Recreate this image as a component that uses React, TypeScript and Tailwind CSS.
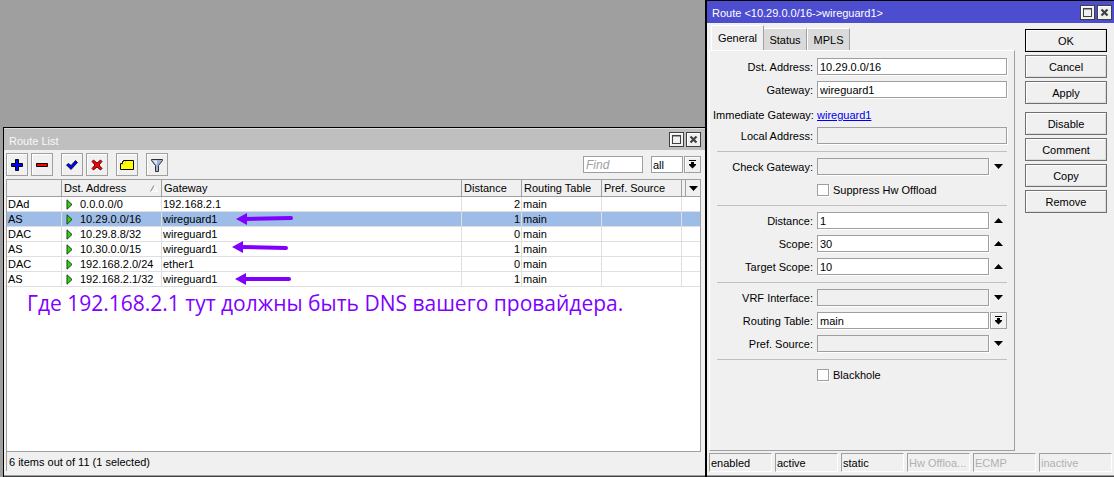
import { useId, type ReactNode } from "react";

const routes = [
  { flags: "DAd", dst: "0.0.0.0/0", gateway: "192.168.2.1", distance: 2, table: "main" },
  { flags: "AS", dst: "10.29.0.0/16", gateway: "wireguard1", distance: 1, table: "main", selected: true },
  { flags: "DAC", dst: "10.29.8.8/32", gateway: "wireguard1", distance: 0, table: "main" },
  { flags: "AS", dst: "10.30.0.0/15", gateway: "wireguard1", distance: 1, table: "main" },
  { flags: "DAC", dst: "192.168.2.0/24", gateway: "ether1", distance: 0, table: "main" },
  { flags: "AS", dst: "192.168.2.1/32", gateway: "wireguard1", distance: 1, table: "main" },
];

function WindowButtons() {
  const cls =
    "flex size-[15px] items-center justify-center border border-[#404040] bg-[#f0f0f0] shadow-[inset_1px_1px_0_#ffffff]";
  return (
    <div className="flex gap-0.5">
      <button type="button" aria-label="Maximize" className={cls}>
        <svg width="9" height="9" viewBox="0 0 9 9" shapeRendering="crispEdges">
          <path d="M.5 .5h8v8h-8z" fill="none" stroke="#404040" />
          <path d="M1 1h7v1H1z" fill="#9f9f9f" />
        </svg>
      </button>
      <button type="button" aria-label="Close" className={cls}>
        <svg width="9" height="9" viewBox="0 0 9 9">
          <path d="M1.5 1.5l6 6M7.5 1.5l-6 6" stroke="#404040" strokeWidth="2.2" />
        </svg>
      </button>
    </div>
  );
}

function ToolButton({ label, children }: { label: string; children: ReactNode }) {
  return (
    <button
      type="button"
      aria-label={label}
      className="flex h-[23px] w-[22px] items-center justify-center border border-[#9f9f9f] bg-[#f0f0f0] shadow-[inset_1px_1px_0_#ffffff]"
    >
      <svg width="16" height="16" viewBox="0 0 16 16">
        {children}
      </svg>
    </button>
  );
}

function Triangle({ up = false }: { up?: boolean }) {
  return (
    <svg width="9" height="5" viewBox="0 0 9 5">
      <path d={up ? "M0 5L4.5 0L9 5z" : "M0 0h9L4.5 5z"} fill="#000" />
    </svg>
  );
}

function PickButton({ label }: { label: string }) {
  return (
    <button
      type="button"
      aria-label={label}
      className="flex size-[17px] shrink-0 items-center justify-center border border-[#9f9f9f] bg-[#f0f0f0] shadow-[inset_1px_1px_0_#ffffff]"
    >
      <svg width="7" height="9" viewBox="0 0 7 9">
        <path d="M0 0h7v1H0zM2 2h3v2h2v1L3.500 8.500L0 5V4h2z" fill="#000" />
      </svg>
    </button>
  );
}

function Separator() {
  return <div className="ml-1 h-0.5 border-b border-[#bfbfbf]" />;
}

type FieldProps = {
  label: string;
  value?: string;
  control?: "none" | "down" | "up" | "pick";
};

function Field({ label, value = "", control = "none" }: FieldProps) {
  const id = useId();
  return (
    <div className="flex h-[17px] items-center">
      <label htmlFor={id} className="w-[100px] shrink-0 text-right whitespace-nowrap">
        {label}:
      </label>
      <input
        id={id}
        type="text"
        defaultValue={value}
        className={
          "ml-1 h-[17px] min-w-0 flex-1 border border-[#9f9f9f] px-0.5 shadow-[1px_1px_0_#ffffff] outline-none " +
          (value ? "bg-white" : "bg-[#f0f0f0]")
        }
      />
      {control === "pick" && (
        <div className="ml-px">
          <PickButton label={"Choose " + label} />
        </div>
      )}
      {(control === "up" || control === "down") && (
        <button
          type="button"
          aria-label={(control === "up" ? "Collapse " : "Expand ") + label}
          className="ml-px flex size-[17px] shrink-0 items-center justify-center"
        >
          <Triangle up={control === "up"} />
        </button>
      )}
    </div>
  );
}

function Check({ label }: { label: string }) {
  return (
    <label className="ml-[104px] flex h-[17px] items-center gap-1">
      <input
        type="checkbox"
        className="size-3 appearance-none border border-[#9f9f9f] bg-white shadow-[1px_1px_0_#ffffff]"
      />
      {label}
    </label>
  );
}

function SideButton({ label, primary = false }: { label: string; primary?: boolean }) {
  return (
    <button
      type="button"
      className={
        "h-[23px] w-full border bg-[#f0f0f0] text-center shadow-[inset_1px_1px_0_#ffffff,inset_-1px_-1px_0_#dcdcdc] " +
        (primary ? "border-black" : "border-[#707070]")
      }
    >
      {label}
    </button>
  );
}

function Arrow({ d, head }: { d: string; head: string }) {
  return (
    <g>
      <path d={d} stroke="#8000ff" strokeWidth="4" strokeLinecap="round" />
      <path d={head} fill="#8000ff" />
    </g>
  );
}

function RouteList() {
  const th = "h-[17px] border-r border-b border-[#9f9f9f] bg-[#f0f0f0] px-0.5 py-0 text-left font-normal whitespace-nowrap";
  const td = "h-[15px] border-r border-b border-[#dfdfdf] px-px py-0 whitespace-nowrap leading-[14px]";
  return (
    <section className="flex flex-1 flex-col border-t border-l border-black bg-[#f0f0f0]">
      <header className="flex h-[22px] items-center justify-between border-t border-[#dcdcdc] bg-[#bfbfbf] pr-1 pl-[5px] text-[#f8f8f8]">
        <h2 className="pt-0.5">Route List</h2>
        <WindowButtons />
      </header>
      <div className="flex flex-1 flex-col pr-1 pl-0.5">
        <div className="flex h-[29px] items-center">
          <div className="flex gap-[3px]">
            <ToolButton label="Add">
              <path d="M6.5 2.5h3v4h4v3h-4v4h-3v-4h-4v-3h4z" fill="#0000ff" stroke="#000" />
            </ToolButton>
            <ToolButton label="Remove">
              <path d="M2.5 6.5h11v3h-11z" fill="#ff0000" stroke="#000" />
            </ToolButton>
          </div>
          <div className="ml-2 flex gap-[3px]">
            <ToolButton label="Enable">
              <path d="M2.5 8L4.5 6.5L7 8.5L11.5 3.5L13.5 5.5L7 12.5z" fill="#0000ff" stroke="#000" strokeWidth=".8" />
            </ToolButton>
            <ToolButton label="Disable">
              <path
                d="M4.5 3L8 6L11.5 3L13 4.5L10 8L13 11.5L11.5 13L8 10L4.5 13L3 11.5L6 8L3 4.5z"
                fill="#ff0000"
                stroke="#400"
                strokeWidth=".9"
              />
            </ToolButton>
          </div>
          <div className="ml-2 flex gap-2">
            <ToolButton label="Comment">
              <path d="M4.500 3.500h10v9h-13v-6h2v-2h1z" fill="#ffff00" stroke="#000" />
              <path d="M2 7.500h4M6.500 4v3" fill="none" stroke="#f0d060" />
            </ToolButton>
            <ToolButton label="Filter">
              <path d="M2.500 2.500h11v1L9.500 8.500v6h-3v-6L2.500 3.500z" fill="#9fb4dc" stroke="#303030" />
              <path d="M4 3.500h4L7.500 8z" fill="#e8f0ff" />
            </ToolButton>
          </div>
          <div className="ml-auto flex items-center">
            <input
              type="text"
              aria-label="Find"
              placeholder="Find"
              className="h-[17px] w-[60px] border border-[#9f9f9f] bg-white px-0.5 text-xs italic outline-none placeholder:text-[#9f9f9f]"
            />
            <input
              type="text"
              aria-label="Routing table filter"
              defaultValue="all"
              className="ml-2 h-[17px] w-8 border border-[#9f9f9f] bg-white px-px outline-none"
            />
            <div className="ml-px">
              <PickButton label="Choose table" />
            </div>
          </div>
        </div>
        <div className="relative flex flex-1 flex-col border border-b-0 border-[#9f9f9f] bg-white">
          <table className="w-full table-fixed border-separate border-spacing-0">
            <colgroup>
              <col className="w-[55px]" />
              <col className="w-[100px]" />
              <col />
              <col className="w-[60px]" />
              <col className="w-[80px]" />
              <col className="w-[80px]" />
              <col className="w-[18px]" />
            </colgroup>
            <thead>
              <tr>
                <th className={th} aria-label="Flags" />
                <th className={th}>
                  <div className="flex items-center justify-between pr-px">
                    Dst. Address
                    <svg width="8" height="7" viewBox="0 0 8 7" fill="none">
                      <path d="M4 .5L7.500 6.500H.5" stroke="#fff" />
                      <path d="M.5 6.500L4 .5" stroke="#808080" />
                    </svg>
                  </div>
                </th>
                <th className={th}>Gateway</th>
                <th className={th}>Distance</th>
                <th className={th}>Routing Table</th>
                <th className={th}>Pref. Source</th>
                <th className="h-[17px] border-b border-[#9f9f9f] bg-[#f0f0f0] p-0">
                  <button
                    type="button"
                    aria-label="Columns"
                    className="ml-[3px] flex h-4 w-[15px] items-center justify-center border-l border-[#9f9f9f]"
                  >
                    <Triangle />
                  </button>
                </th>
              </tr>
            </thead>
            <tbody>
              {routes.map((r) => (
                <tr key={r.dst} className={r.selected ? "bg-[#9dbde8]" : "bg-white"}>
                  <td className={td}>{r.flags}</td>
                  <td className={td}>
                    <div className="flex items-center gap-[7px] pl-[3px]">
                      <svg width="7" height="11" viewBox="0 0 7 11">
                        <path d="M1 .8L6 5.500L1 10.200z" fill="#20e000" stroke="#303030" strokeWidth="1" />
                      </svg>
                      {r.dst}
                    </div>
                  </td>
                  <td className={td}>{r.gateway}</td>
                  <td className={td + " text-right"}>{r.distance}</td>
                  <td className={td}>{r.table}</td>
                  <td className={td} />
                  <td className="border-b border-[#dfdfdf] p-0" />
                </tr>
              ))}
            </tbody>
          </table>
          <svg className="absolute top-[30px] left-[223px]" width="66" height="80" viewBox="0 0 66 80" fill="none">
            <Arrow d="M15 9L61 8" head="M6 9L17 3V15z" />
            <Arrow d="M10 37L56 38" head="M2 37L13 31V43z" />
            <Arrow d="M14 69H59" head="M5 69L16 63V75z" />
          </svg>
          <p className="pt-[2px] pl-5 font-['Open_Sans','Noto_Sans',sans-serif] text-[21px] leading-7 text-[#8000ff]">
            Где 192.168.2.1 тут должны быть DNS вашего провайдера.
          </p>
        </div>
        <footer className="mb-1 h-5 border-t border-l border-[#9f9f9f] pt-0.5 pl-0.5">
          6 items out of 11 (1 selected)
        </footer>
      </div>
      <div className="h-0.5 border-t border-[#9f9f9f] bg-[#404040]" />
    </section>
  );
}

function RouteDialog() {
  const status = [
    { text: "enabled", on: true },
    { text: "active", on: true },
    { text: "static", on: true },
    { text: "Hw Offloa...", on: false },
    { text: "ECMP", on: false },
    { text: "inactive", on: false },
  ];
  return (
    <section className="flex w-[409px] shrink-0 flex-col border-t border-l-2 border-black bg-[#f0f0f0]">
      <header className="flex h-[22px] items-center justify-between bg-[#4d4dcf] pr-0.5 pl-[5px] text-white">
        <h2 className="pt-0.5">Route &lt;10.29.0.0/16-&gt;wireguard1&gt;</h2>
        <WindowButtons />
      </header>
      <div className="flex flex-1 pt-0.5 pl-0.5">
        <div className="flex flex-1 flex-col">
          <div className="flex items-end pl-0.5" role="tablist">
            <button
              type="button"
              role="tab"
              aria-selected="true"
              className="h-[25px] w-[53px] border-t border-r border-l border-t-white border-r-[#9f9f9f] border-l-white"
            >
              General
            </button>
            <button
              type="button"
              role="tab"
              aria-selected="false"
              className="h-[22px] w-[43px] border-t border-r border-t-white border-r-[#9f9f9f] bg-[#dadada]"
            >
              Status
            </button>
            <button
              type="button"
              role="tab"
              aria-selected="false"
              className="h-[22px] w-[43px] border-t border-r border-l border-t-white border-r-[#9f9f9f] border-l-white bg-[#dadada]"
            >
              MPLS
            </button>
          </div>
          <div
            role="tabpanel"
            className="flex flex-1 flex-col gap-1.5 border border-t-white border-r-[#9f9f9f] border-b-[#9f9f9f] border-l-white py-[7px] pr-[7px] pl-[3px]"
          >
            <Field label="Dst. Address" value="10.29.0.0/16" />
            <Field label="Gateway" value="wireguard1" />
            <div className="flex h-[17px] items-end leading-3">
              <span className="w-[100px] text-right whitespace-nowrap">Immediate Gateway:</span>
              <a href="#wireguard1" className="ml-1 text-[#0000ee] underline">
                wireguard1
              </a>
            </div>
            <Field label="Local Address" />
            <Separator />
            <Field label="Check Gateway" control="down" />
            <Check label="Suppress Hw Offload" />
            <Separator />
            <Field label="Distance" value="1" control="up" />
            <Field label="Scope" value="30" control="up" />
            <Field label="Target Scope" value="10" control="up" />
            <Separator />
            <Field label="VRF Interface" control="down" />
            <Field label="Routing Table" value="main" control="pick" />
            <Field label="Pref. Source" control="down" />
            <Separator />
            <Check label="Blackhole" />
          </div>
        </div>
        <div className="flex w-[99px] shrink-0 flex-col gap-[3px] pt-1 pr-[7px] pl-2.5">
          <SideButton label="OK" primary />
          <SideButton label="Cancel" />
          <SideButton label="Apply" />
          <div className="mt-[5px] flex flex-col gap-[3px]">
            <SideButton label="Disable" />
            <SideButton label="Comment" />
            <SideButton label="Copy" />
            <SideButton label="Remove" />
          </div>
        </div>
      </div>
      <footer className="mt-0.5 mb-[3px] flex gap-[3px] pr-0.5 pl-0.5">
        {status.map((s) => (
          <span
            key={s.text}
            className={
              "h-[19px] w-[63px] border border-t-[#9f9f9f] border-r-white border-b-white border-l-[#9f9f9f] pt-px pl-px whitespace-nowrap last:flex-1 " +
              (s.on ? "text-black" : "text-[#b0b0b0]")
            }
          >
            {s.text}
          </span>
        ))}
      </footer>
      <div className="h-0.5 border-t border-[#9f9f9f] bg-[#404040]" />
    </section>
  );
}

export default function App() {
  return (
    <main className="flex min-h-screen bg-[#9f9f9f] font-['Liberation_Sans',Arial,sans-serif] text-[11px] leading-4 text-black">
      <div className="flex min-w-0 flex-1 flex-col pt-[127px] pl-[3px]">
        <RouteList />
      </div>
      <RouteDialog />
    </main>
  );
}
